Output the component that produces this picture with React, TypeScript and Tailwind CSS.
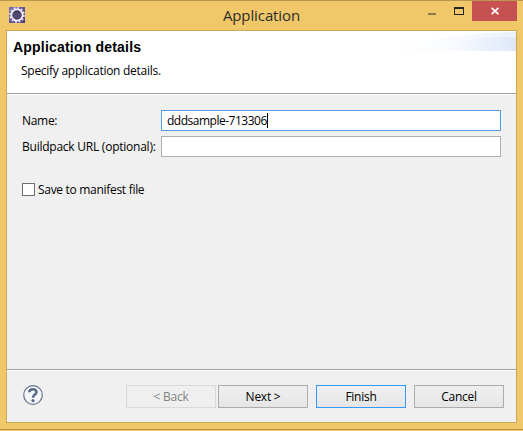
import React from "react";

const ui = "font-['Open_Sans','Noto_Sans',sans-serif] text-[12px] leading-[16px] whitespace-nowrap";

function GearIcon() {
  return (
    <svg width="16" height="16" viewBox="0 0 16 16">
      <defs>
        <linearGradient id="gear-bg" x1="0" y1="0" x2="1" y2="1">
          <stop offset="0" stopColor="#8072b4" />
          <stop offset="1" stopColor="#4b3885" />
        </linearGradient>
      </defs>
      <rect width="16" height="16" fill="url(#gear-bg)" />
      <circle cx="8" cy="8" r="7" fill="none" stroke="#e6e3ee" strokeWidth="1.6" strokeDasharray="2 1.665" />
      <circle cx="8" cy="8" r="5.6" fill="#41395f" stroke="#f3f1f7" strokeWidth="1.7" />
      <path d="M4 6.3h8M3.6 8.2h8.8M4 10h8" stroke="#69628c" strokeWidth=".8" />
    </svg>
  );
}

function TitleBar() {
  return (
    <div className="flex h-[29px] shrink-0 items-start">
      <div className="ml-[9px] mt-[6px] w-[158px]">
        <GearIcon />
      </div>
      <div className="mt-[3px] w-[189px] text-center font-['Open_Sans','Noto_Sans',sans-serif] text-[15px] leading-[22px] tracking-[-0.1px] text-[#2d2d29]">
        Application
      </div>
      <div className="ml-[72px] mt-[12px] h-[2px] w-[8px] bg-[#91794b]" />
      <div className="ml-[18px] mt-[6px] box-border h-[8px] w-[10px] border border-t-2 border-[#262626]" />
      <div className="ml-[8px] flex h-[20px] w-[45px] items-center justify-center bg-[#c75050]">
        <svg width="8" height="8" viewBox="0 0 8 8">
          <path d="M.6.9 7.4 7.1M7.4.9.6 7.1" stroke="#fff" strokeWidth="1.8" />
        </svg>
      </div>
    </div>
  );
}

function Header() {
  return (
    <div className="flex h-[62px] shrink-0 justify-between bg-white">
      <div className="pl-[6px] pt-[8px]">
        <div className="whitespace-nowrap font-['Liberation_Sans',Arial,sans-serif] text-[14px] font-bold leading-[16px] tracking-[0.2px] text-black">
          Application details
        </div>
        <div className={`${ui} ml-[8px] mt-[8px] text-black`}>
          <span className="tracking-[-0.27px]">Specify application details.</span>
        </div>
      </div>
      <svg width="140" height="20" viewBox="0 0 140 20">
        <defs>
          <linearGradient id="swoosh" x1="0" x2="1">
            <stop offset="0" stopColor="#fff" />
            <stop offset=".4" stopColor="#f9fbff" />
            <stop offset="1" stopColor="#dce5f8" />
          </linearGradient>
        </defs>
        <path d="M0 20C40 10 90 1 140 1V20Z" fill="url(#swoosh)" opacity=".55" />
        <path d="M30 20C75 10 100 6 140 6V20Z" fill="url(#swoosh)" opacity=".85" />
      </svg>
    </div>
  );
}

function Rule() {
  return <div className="h-[2px] shrink-0 border-t border-[#a0a0a0] bg-white" />;
}

function Field({ label, tracking, value, focused }: { label: string; tracking: string; value?: string; focused?: boolean }) {
  return (
    <div className="flex h-[21px] items-center">
      <div className={`${ui} ${tracking} w-[139px]`}>{label}</div>
      <div className={`flex h-[21px] w-[340px] items-center border bg-white pl-[5px] ${focused ? "border-[#569de5]" : "border-[#abadb3]"}`}>
        {value && <span className={`${ui} tracking-[-0.49px]`}>{value}</span>}
        {focused && <span className="h-[15px] w-px bg-black" />}
      </div>
    </div>
  );
}

function Button({ label, kind = "normal" }: { label: string; kind?: "normal" | "disabled" | "primary" }) {
  const look = {
    normal: "border-[#acacac] bg-linear-to-b from-[#f0f0f0] to-[#e5e5e5] text-black",
    disabled: "border-[#d9d9d9] bg-[#efefef] text-[#838383]",
    primary: "border-[#3399ff] bg-linear-to-b from-[#f0f0f0] to-[#e5e5e5] text-black",
  }[kind];
  return (
    <button type="button" className={`${ui} ${look} flex h-[23px] w-[90px] items-center justify-center border tracking-[-0.25px]`}>
      {label}
    </button>
  );
}

function HelpIcon() {
  return (
    <svg width="20" height="20" viewBox="0 0 20 20">
      <circle cx="10" cy="10" r="9.3" fill="#f5f6f8" stroke="#66758f" strokeWidth="1.2" />
      <path d="M6.3 7.2C6.4 4.9 8 4.2 10 4.2s3.5 1 3.5 2.9c0 2.5-3.5 2.5-3.5 5.6" fill="none" stroke="#576a8c" strokeWidth="2.6" />
      <circle cx="10" cy="15.6" r="1.6" fill="#576a8c" />
    </svg>
  );
}

export default function App() {
  return (
    <div className="flex h-[431px] w-[523px] flex-col overflow-hidden bg-[#f0c869]">
      <div className="flex h-[430px] flex-col border-y border-[#b8984f] bg-[#f0c869]">
        <TitleBar />
        <div className="ml-[6px] flex h-[393px] w-[511px] flex-col border border-[#c9a957] bg-[#f0f0f0] text-black">
          <Header />
          <Rule />
          <div className="flex flex-1 flex-col pl-[15px] pt-[15px]">
            <div className="flex flex-col gap-[5px]">
              <Field label="Name:" tracking="tracking-[-0.3px]" value="dddsample-713306" focused />
              <Field label="Buildpack URL (optional):" tracking="tracking-[-0.24px]" />
            </div>
            <div className="mt-[26px] flex h-[13px] items-center gap-[3px]">
              <div className="size-[13px] border border-[#707070] bg-white" />
              <span className={`${ui} tracking-[-0.3px]`}>Save to manifest file</span>
            </div>
          </div>
          <Rule />
          <div className="flex h-[51px] shrink-0 items-start pl-[16px] pt-[14px]">
            <HelpIcon />
            <div className="ml-[83px] flex gap-[8px]">
              <div className="flex gap-[2px]">
                <Button label="< Back" kind="disabled" />
                <Button label="Next >" />
              </div>
              <Button label="Finish" kind="primary" />
              <Button label="Cancel" />
            </div>
          </div>
        </div>
      </div>
    </div>
  );
}
